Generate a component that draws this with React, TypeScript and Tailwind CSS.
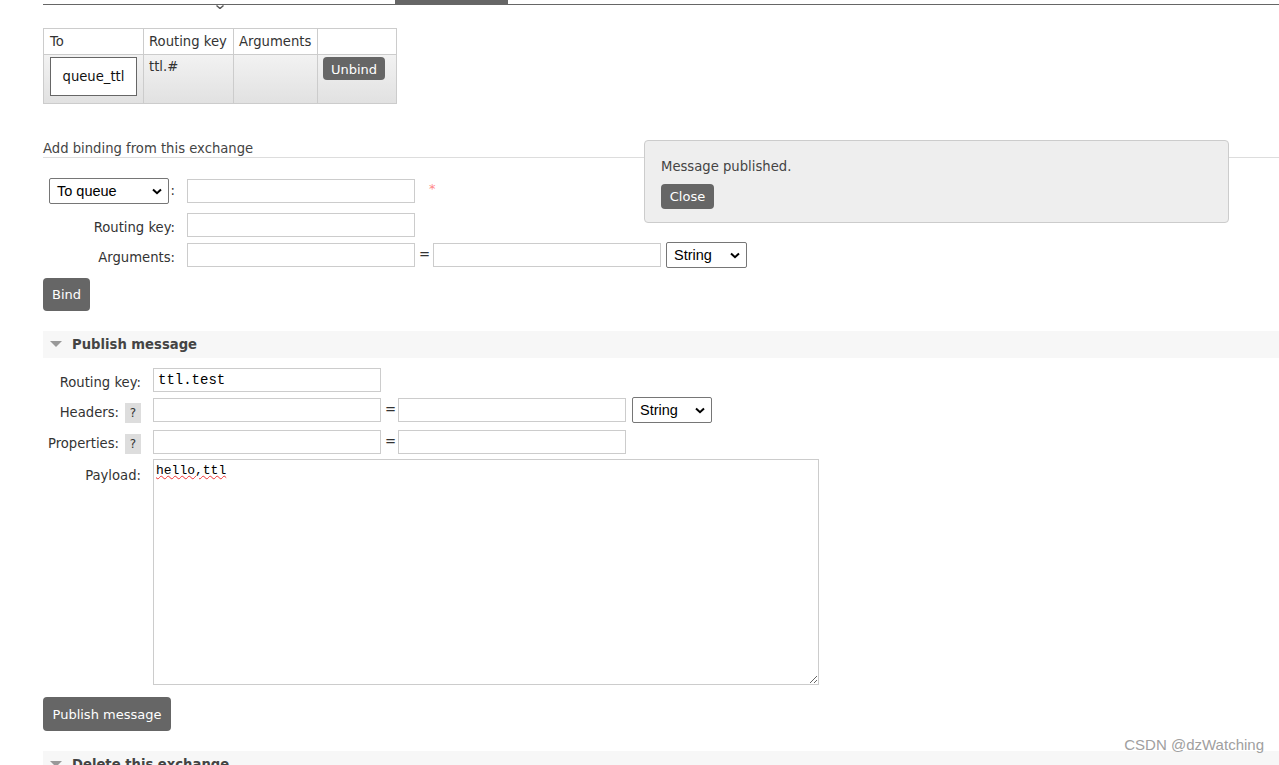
import React from "react";

const btn = "bg-[#666] text-white rounded-[4px] text-[13px] leading-none";
const input = "h-[24px] w-[228px] border border-[#ccc] bg-white px-[4px] text-[13px]";

const Select: React.FC<{ label: string; w: string }> = ({ label, w }) => (
  <div className={`${w} h-[26px] flex items-center justify-between border border-[#767676] rounded-[2px] bg-white pl-[7px] pr-[6px] text-[14.5px] text-black [font-family:'Liberation_Sans',Arial,sans-serif]`}>
    <span>{label}</span>
    <svg width="10" height="7" viewBox="0 0 10 7">
      <path d="M1 1.5 L5 5.2 L9 1.5" stroke="#000" strokeWidth="2" fill="none" />
    </svg>
  </div>
);

const Tri: React.FC = () => (
  <svg width="12" height="7" viewBox="0 0 12 7" className="mr-[10px]">
    <path d="M0 0 L12 0 L6 6 Z" fill="#999" />
  </svg>
);

const Q: React.FC = () => (
  <span className="ml-[6px] inline-flex h-[20px] w-[16px] items-center justify-center bg-[#ddd] text-[12px]">?</span>
);

export default function App() {
  return (
    <div className="relative h-[765px] w-[1279px] overflow-hidden bg-white text-[13.2px] leading-[16px] text-[#333] [font-family:'DejaVu_Sans',Verdana,sans-serif]">
      <div className="pl-[43px]">
        {/* tab strip */}
        <div className="flex h-[5px] items-end">
          <div className="relative h-[5px] w-[352px] border-b border-[#666]">
            <svg width="8" height="4" viewBox="0 0 8 4" className="absolute left-[173px] top-[5px]">
              <path d="M0.5 0.5 L4 3.5 L7.5 0.5" stroke="#555" strokeWidth="1.4" fill="none" />
            </svg>
          </div>
          <div className="h-[5px] w-[113px] bg-[#666]" />
          <div className="h-[5px] flex-1 border-b border-[#666]" />
        </div>

        {/* bindings table */}
        <table className="mt-[23px] border-collapse">
          <thead>
            <tr className="h-[26px] text-left">
              <th className="w-[100px] border border-[#ccc] px-[6px] font-normal">To</th>
              <th className="w-[90px] border border-[#ccc] px-[5px] font-normal">Routing key</th>
              <th className="w-[84px] border border-[#ccc] px-[5px] font-normal">Arguments</th>
              <th className="w-[79px] border border-[#ccc]"></th>
            </tr>
          </thead>
          <tbody>
            <tr className="h-[49px] bg-gradient-to-b from-[#f2f2f2] to-[#e1e1e1] align-top">
              <td className="border border-[#ccc] px-[6px] pt-[2px]">
                <div className="flex h-[39px] w-[87px] items-center justify-center border border-[#666] bg-white text-[#111]">queue_ttl</div>
              </td>
              <td className="border border-[#ccc] px-[5px] pt-[4px]">ttl.#</td>
              <td className="border border-[#ccc]"></td>
              <td className="border border-[#ccc] px-[5px] pt-[2px]">
                <button className={`${btn} h-[23px] w-[62px] pt-[1px]`}>Unbind</button>
              </td>
            </tr>
          </tbody>
        </table>

        {/* add binding */}
        <div className="mt-[37px] border-b border-[#ddd] text-[#444]">Add binding from this exchange</div>

        <div className="mt-[20px] flex flex-col">
          <div className="flex h-[26px] items-center">
            <div className="flex w-[132px] items-center pl-[6px]">
              <Select label="To queue" w="w-[122px]" />
              <span className="ml-[2px]">:</span>
            </div>
            <div className={`${input} ml-[12px]`} />
            <span className="ml-[14px] mt-[-4px] text-[13px] text-[#f88]">*</span>
          </div>
          <div className="mt-[9px] flex h-[24px] items-center">
            <div className="w-[132px] pt-[6px] text-right">Routing key:</div>
            <div className={`${input} ml-[12px]`} />
          </div>
          <div className="mt-[6px] flex h-[24px] items-center">
            <div className="w-[132px] pt-[6px] text-right">Arguments:</div>
            <div className={`${input} ml-[12px]`} />
            <span className="mx-[4px] w-[10px] text-center">=</span>
            <div className={input} />
            <div className="ml-[5px]">
              <Select label="String" w="w-[81px]" />
            </div>
          </div>
        </div>

        <button className={`${btn} mt-[11px] h-[33px] w-[47px]`}>Bind</button>

        {/* publish message */}
        <div className="mt-[20px] flex h-[27px] items-center bg-[#f7f7f7] pl-[7px] font-bold text-[#444]">
          <Tri />
          Publish message
        </div>

        <div className="mt-[10px] flex flex-col">
          <div className="flex h-[24px] items-center">
            <div className="w-[98px] pt-[6px] text-right">Routing key:</div>
            <div className={`${input} ml-[12px] flex items-center [font-family:'Liberation_Mono',monospace] text-[14px] text-black`}>ttl.test</div>
          </div>
          <div className="mt-[6px] flex h-[24px] items-center">
            <div className="flex w-[98px] items-center justify-end pt-[6px]">Headers:<Q /></div>
            <div className={`${input} ml-[12px]`} />
            <span className="mx-[4px] w-[9px] text-center">=</span>
            <div className={input} />
            <div className="ml-[6px]">
              <Select label="String" w="w-[80px]" />
            </div>
          </div>
          <div className="mt-[8px] flex h-[24px] items-center">
            <div className="flex w-[98px] items-center justify-end pt-[4px]">Properties:<Q /></div>
            <div className={`${input} ml-[12px]`} />
            <span className="mx-[4px] w-[9px] text-center">=</span>
            <div className={input} />
          </div>
          <div className="mt-[5px] flex items-start">
            <div className="w-[98px] pt-[9px] text-right">Payload:</div>
            <textarea
              className="ml-[12px] h-[226px] w-[666px] resize border border-[#ccc] px-[2px] py-[2px] text-[13px] leading-[18px] text-black [font-family:'Liberation_Mono',monospace]"
              defaultValue=""
              spellCheck={false}
            />
          </div>
        </div>

        <button className={`${btn} mt-[12px] h-[34px] w-[128px]`}>Publish message</button>

        <div className="mt-[20px] flex h-[27px] items-center bg-[#f7f7f7] pl-[7px] font-bold text-[#444]">
          <Tri />
          Delete this exchange
        </div>
      </div>

      {/* payload text with spellcheck squiggle */}
      <div className="absolute left-[156px] top-[462px] text-[13px] leading-[18px] text-black underline decoration-wavy decoration-[#e33] decoration-1 [font-family:'Liberation_Mono',monospace]">
        hello,ttl
      </div>

      {/* message popup */}
      <div className="absolute left-[644px] top-[140px] h-[83px] w-[585px] rounded-[4px] border border-[#ccc] bg-[#eee] px-[16px] pt-[18px] text-[#444]">
        <div>Message published.</div>
        <button className={`${btn} mt-[9px] h-[25px] w-[53px]`}>Close</button>
      </div>

      <div className="absolute right-[15px] top-[737px] text-[15px] text-[#a0a0a0] [font-family:'Liberation_Sans',Arial,sans-serif]">
        CSDN @dzWatching
      </div>
    </div>
  );
}
